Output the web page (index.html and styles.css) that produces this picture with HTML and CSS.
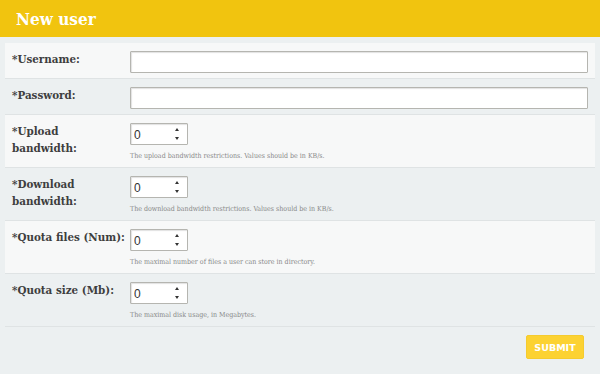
FILE: index.html
```html
<!DOCTYPE html>
<html lang="en">
<head>
    <meta charset="UTF-8">
    <title>New user</title>
    <link rel="stylesheet" href="styles.css">
</head>
<body>
    <div class="header">
        <h1>New user</h1>
    </div>

    <form class="user-form">
        <table class="form-table">
            <tr class="odd">
                <th>*Username:</th>
                <td><input type="text" class="text-input"></td>
            </tr>
            <tr>
                <th>*Password:</th>
                <td><input type="password" class="text-input"></td>
            </tr>
            <tr class="odd">
                <th>*Upload<br>bandwidth:</th>
                <td>
                    <div class="num-box"><input type="number" class="num-input" value="0"><span class="spin"></span></div>
                    <div class="help">The upload bandwidth restrictions. Values should be in KB/s.</div>
                </td>
            </tr>
            <tr>
                <th>*Download<br>bandwidth:</th>
                <td>
                    <div class="num-box"><input type="number" class="num-input" value="0"><span class="spin"></span></div>
                    <div class="help">The download bandwidth restrictions. Values should be in KB/s.</div>
                </td>
            </tr>
            <tr class="odd">
                <th>*Quota files (Num):</th>
                <td>
                    <div class="num-box"><input type="number" class="num-input" value="0"><span class="spin"></span></div>
                    <div class="help">The maximal number of files a user can store in directory.</div>
                </td>
            </tr>
            <tr>
                <th>*Quota size (Mb):</th>
                <td>
                    <div class="num-box"><input type="number" class="num-input" value="0"><span class="spin"></span></div>
                    <div class="help">The maximal disk usage, in Megabytes.</div>
                </td>
            </tr>
        </table>
        <div class="actions">
            <button type="button" class="submit-btn">SUBMIT</button>
        </div>
    </form>
</body>
</html>
```

FILE: styles.css
```css
body {
    margin: 0;
    background-color: #ecf0f1;
    font-family: 'DejaVu Serif Condensed', 'DejaVu Serif', serif;
    color: #444;
}
.header {
    background-color: #f1c40f;
    height: 37px;
    padding: 0 16px;
    display: flex;
    align-items: center;
}
.header h1 {
    margin: 0;
    color: #fff;
    font-size: 17px;
    font-weight: bold;
}
.user-form {
    padding: 6px 5px 0 5px;
}
.form-table {
    width: 100%;
    border-collapse: collapse;
    table-layout: fixed;
}
.form-table tr {
    border-bottom: 1px solid #dfe3e4;
}
.form-table tr.odd {
    background-color: #f7f8f8;
}
.form-table th {
    width: 118px;
    padding: 8px 0 5px 7px;
    text-align: left;
    vertical-align: top;
    font-size: 11.5px;
    line-height: 17px;
    font-weight: bold;
    color: #3e3e3e;
    white-space: nowrap;
}
.form-table td {
    padding: 8px 7px 5px 0;
    vertical-align: top;
}
.text-input {
    display: block;
    box-sizing: border-box;
    width: 100%;
    height: 22px;
    border: 1px solid #b5b5b0;
    border-radius: 1px;
    background: #fff;
    box-shadow: inset 1px 1px 1px rgba(0, 0, 0, 0.12);
    margin: 0;
}
.num-box {
    position: relative;
    width: 58px;
    height: 22px;
}
.num-input {
    display: block;
    box-sizing: border-box;
    width: 58px;
    height: 22px;
    border: 1px solid #b5b5b0;
    border-radius: 1px;
    background: #fff;
    box-shadow: inset 1px 1px 1px rgba(0, 0, 0, 0.12);
    font-family: 'Liberation Sans', sans-serif;
    font-size: 12px;
    color: #333;
    padding: 2px 3px 0 3px;
    margin: 0;
    -moz-appearance: textfield;
}
.num-input::-webkit-inner-spin-button,
.num-input::-webkit-outer-spin-button {
    -webkit-appearance: none;
    margin: 0;
}
/* small up/down arrows drawn over the input */
.spin {
    position: absolute;
    right: 8px;
    top: 5px;
    width: 5px;
    height: 12px;
}
.spin::before,
.spin::after {
    content: "";
    position: absolute;
    left: 0;
    border-left: 2.5px solid transparent;
    border-right: 2.5px solid transparent;
}
.spin::before {
    top: 0;
    border-bottom: 3px solid #333;
}
.spin::after {
    bottom: 0;
    border-top: 3px solid #333;
}
.help {
    margin-top: 7px;
    font-size: 7px;
    line-height: 9px;
    color: #888;
    padding-bottom: 1px;
}
.actions {
    display: flex;
    justify-content: flex-end;
    padding: 8px 11px 0 0;
}
.submit-btn {
    background-color: #fcd232;
    color: #fff;
    border: 1px solid #f5cb2e;
    border-radius: 2px;
    width: 58px;
    height: 24px;
    font-family: 'DejaVu Sans', sans-serif;
    font-weight: bold;
    font-size: 9.5px;
    cursor: pointer;
}
```
